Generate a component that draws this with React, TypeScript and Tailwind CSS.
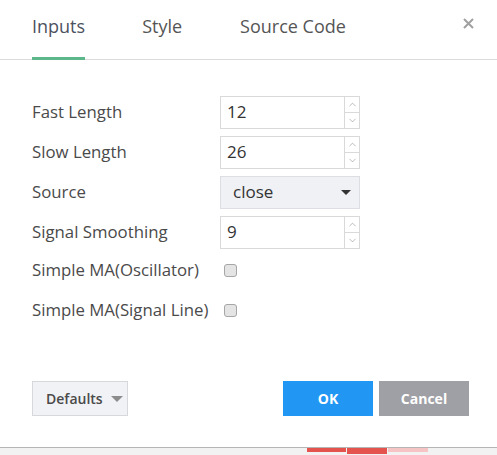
import { ChevronUp, ChevronDown } from "lucide-react";

type Row =
  | { kind: "number"; label: string; value: string }
  | { kind: "select"; label: string; value: string }
  | { kind: "check"; label: string };

const rows: Row[] = [
  { kind: "number", label: "Fast Length", value: "12" },
  { kind: "number", label: "Slow Length", value: "26" },
  { kind: "select", label: "Source", value: "close" },
  { kind: "number", label: "Signal Smoothing", value: "9" },
  { kind: "check", label: "Simple MA(Oscillator)" },
  { kind: "check", label: "Simple MA(Signal Line)" },
];

function NumberField(props: { value: string }) {
  return (
    <div className="w-[140px] h-[33px] border border-[#d9d9d9] bg-white flex">
      <div className="flex-1 pl-[6px] flex items-center text-[17px] text-[#333]">{props.value}</div>
      <div className="w-[15px] border-l border-[#d9d9d9] flex flex-col">
        <div className="flex-1 flex items-center justify-center border-b border-[#d9d9d9] text-[#8a8a8a]">
          <ChevronUp size={11} strokeWidth={1.25} />
        </div>
        <div className="flex-1 flex items-center justify-center text-[#8a8a8a]">
          <ChevronDown size={11} strokeWidth={1.25} />
        </div>
      </div>
    </div>
  );
}

function SelectField(props: { value: string }) {
  return (
    <div className="w-[140px] h-[33px] border border-[#dcdee3] bg-[#f0f1f5] flex items-center pl-[12px] pr-[8px]">
      <span className="flex-1 text-[17px] text-[#333]">{props.value}</span>
      <span className="w-0 h-0 border-l-[5px] border-r-[5px] border-t-[5px] border-l-transparent border-r-transparent border-t-[#333]" />
    </div>
  );
}

export default function App() {
  return (
    <div className="w-[497px] h-[455px] bg-white flex flex-col font-['Open_Sans',sans-serif] text-[#4a4a4a]">
      <div className="h-[448px] flex flex-col border-b border-[#b5b5b5]">
        <div className="h-[60px] border-b border-[#dcdcdc] flex pl-8 pr-[23px]">
          <div className="h-[60px] -mb-px pt-[13px] border-b-[3px] border-[#5cb88a] text-[18px] leading-[26px] text-[#4c525e]">
            Inputs
          </div>
          <div className="ml-[57px] pt-[13px] text-[18px] leading-[26px] text-[#555]">Style</div>
          <div className="ml-[58px] pt-[13px] text-[18px] leading-[26px] text-[#555]">Source Code</div>
          <div className="ml-auto pt-[18px]">
            <svg width="11" height="11" viewBox="0 0 11 11">
              <path d="M1 1 L10 10 M10 1 L1 10" stroke="#a0a0a0" strokeWidth="2" />
            </svg>
          </div>
        </div>

        <div className="flex-1 px-8 pt-[32px] flex flex-col">
          {rows.map((row, i) => (
            <div key={row.label} className={"h-[40px] flex items-center " + (i === 4 ? "-mt-[2px]" : "")}>
              <div className="w-[188px] text-[16.8px] leading-[20px] text-[#4a4a4a]">{row.label}</div>
              {row.kind === "number" && <NumberField value={row.value} />}
              {row.kind === "select" && <SelectField value={row.value} />}
              {row.kind === "check" && (
                <div className="ml-[4px] w-[13px] h-[13px] rounded-[3px] border border-[#a6a6a6] bg-[#e4e4e4]" />
              )}
            </div>
          ))}
        </div>

        <div className="pl-8 pr-[28px] pb-[31px] flex items-center">
          <button
            type="button"
            className="w-[96px] h-[35px] border border-[#d6d8dc] bg-[#f1f2f5] flex items-center pl-[13px] gap-[8px] text-[14px] font-semibold text-[#4a4a4a]"
          >
            Defaults
            <span className="w-0 h-0 border-l-[6px] border-r-[6px] border-t-[6px] border-l-transparent border-r-transparent border-t-[#8c8c8c]" />
          </button>
          <button
            type="button"
            className="ml-auto w-[90px] h-[35px] bg-[#2196f3] text-white text-[14px] font-bold"
          >
            OK
          </button>
          <button
            type="button"
            className="ml-[6px] w-[90px] h-[35px] bg-[#9fa0a5] text-white text-[14px] font-bold"
          >
            Cancel
          </button>
        </div>
      </div>

      <div className="flex-1 bg-[#f2f2f2] flex items-start pl-[307px] gap-[1px]">
        <div className="w-[39px] h-[4px] bg-[#e5534f]" />
        <div className="w-[40px] h-[6px] bg-[#e5534f]" />
        <div className="w-[40px] h-[4px] bg-[#f6c4c4]" />
      </div>
    </div>
  );
}
